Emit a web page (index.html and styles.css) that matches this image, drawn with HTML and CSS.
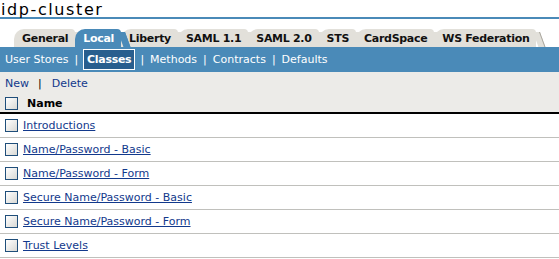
FILE: index.html
```html
<!DOCTYPE html>
<html lang="en">
<head>
  <meta charset="UTF-8">
  <title>idp-cluster</title>
  <link rel="stylesheet" href="styles.css">
</head>
<body>
  <h1 class="title">idp-cluster</h1>

  <div class="tabs">
    <a class="tab">General</a>
    <a class="tab active">Local</a>
    <a class="tab">Liberty</a>
    <a class="tab">SAML 1.1</a>
    <a class="tab">SAML 2.0</a>
    <a class="tab">STS</a>
    <a class="tab">CardSpace</a>
    <a class="tab">WS Federation</a>
  </div>

  <div class="subnav">
    <a>User Stores</a><span class="sep">|</span>
    <a class="current">Classes</a><span class="sep">|</span>
    <a>Methods</a><span class="sep">|</span>
    <a>Contracts</a><span class="sep">|</span>
    <a>Defaults</a>
  </div>

  <div class="toolbar">
    <div class="actions">
      <a href="#">New</a><span class="sep">|</span><a href="#">Delete</a>
    </div>
    <div class="head-row">
      <span class="check"></span>
      <span class="col-name">Name</span>
    </div>
  </div>

  <ul class="rows">
    <li><span class="check"></span><a href="#">Introductions</a></li>
    <li><span class="check"></span><a href="#">Name/Password - Basic</a></li>
    <li><span class="check"></span><a href="#">Name/Password - Form</a></li>
    <li><span class="check"></span><a href="#">Secure Name/Password - Basic</a></li>
    <li><span class="check"></span><a href="#">Secure Name/Password - Form</a></li>
    <li><span class="check"></span><a href="#">Trust Levels</a></li>
  </ul>
</body>
</html>
```

FILE: styles.css
```css
body {
  margin: 0;
  padding: 0;
  font-family: "DejaVu Sans", Verdana, sans-serif;
  font-size: 11px;
  background: #fff;
  color: #000;
}

.title {
  margin: 0;
  padding: 2px 0 0 1px;
  height: 15px;
  font-size: 16px;
  line-height: 15px;
  font-weight: normal;
  letter-spacing: 1.6px;
  border-bottom: 2px solid #4a8ab8;
}

.tabs {
  display: flex;
  padding: 10px 0 0 14px;
  height: 18px;
}

.tab {
  position: relative;
  display: block;
  height: 18px;
  line-height: 19px;
  padding: 0 7px 0 8px;
  background: #e2e0da;
  border-radius: 10px 4px 0 0;
  font-weight: bold;
  font-size: 11px;
  letter-spacing: -0.3px;
  white-space: nowrap;
  color: #111;
}

.tab::after {
  content: "";
  position: absolute;
  right: -4px;
  top: 3px;
  bottom: 0;
  width: 6px;
  background: #e2e0da;
  border-right: 1px solid #a9a69e;
  transform: skewX(20deg);
  transform-origin: top;
}

.tab.active {
  background: #4a8ab8;
  color: #fff;
  z-index: 1;
}

.tab.active::after {
  background: #4a8ab8;
  border-right-color: #4a8ab8;
}

.subnav {
  display: flex;
  align-items: center;
  height: 25px;
  padding-left: 4px;
  background: #4a8ab8;
  color: #fff;
  font-size: 11px;
}

.subnav a {
  padding: 0 1px;
}

.subnav .sep {
  margin: 0 5px;
}

.subnav .current {
  font-weight: bold;
  background: #285e8e;
  border: 1px solid #fff;
  padding: 3px 3px 3px;
  letter-spacing: -0.3px;
}

.toolbar {
  background: #ecebe8;
  border-bottom: 2px solid #000;
  height: 40px;
}

.actions {
  padding: 3px 0 0 5px;
  height: 17px;
  line-height: 17px;
}

.actions a,
.rows a {
  color: #12398c;
}

.actions a {
  text-decoration: none;
}

.actions .sep {
  margin: 0 10px 0 9px;
  color: #000;
}

.head-row {
  display: flex;
  align-items: center;
  padding-left: 5px;
  height: 22px;
}

.col-name {
  font-weight: bold;
  margin-left: 9px;
}

.check {
  display: inline-block;
  width: 11px;
  height: 11px;
  border: 1px solid #1f4e7a;
  background: linear-gradient(135deg, #ffffff, #d8d8d4);
}

.rows {
  list-style: none;
  margin: 0;
  padding: 0;
}

.rows li {
  display: flex;
  align-items: center;
  height: 23px;
  padding-left: 5px;
  border-bottom: 1px solid #c0c0bc;
}

.rows a {
  margin-left: 5px;
  font-size: 11px;
}
```
